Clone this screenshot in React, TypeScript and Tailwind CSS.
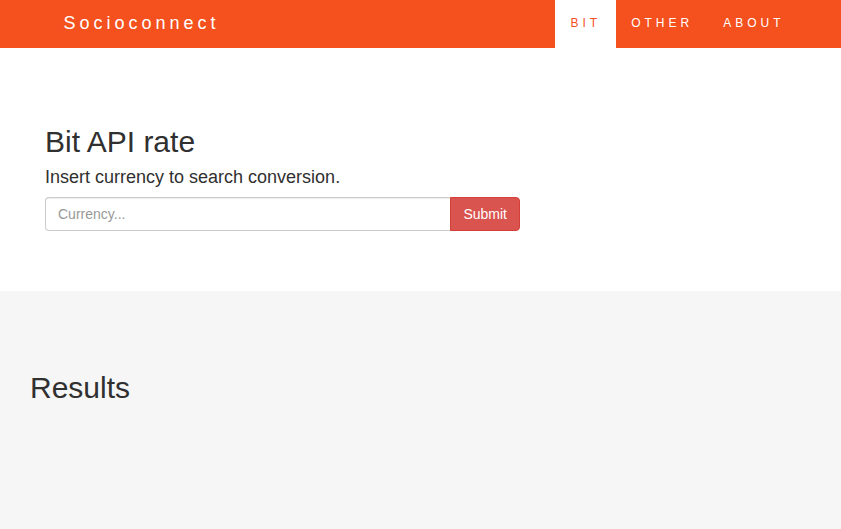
import React from "react";

const links = [
  { label: "BIT", href: "#bit", active: true },
  { label: "OTHER", href: "#other", active: false },
  { label: "ABOUT", href: "#about", active: false },
];

export default function App() {
  return (
    <div className="flex min-h-screen flex-col bg-white font-['Liberation_Sans',Arial,sans-serif] text-[#303030]">
      <nav className="bg-[#f4511e]">
        <div className="mx-auto flex h-12 max-w-[758px] justify-between pl-[22px] text-white">
          <a href="#top" className="py-3 text-lg leading-[22px] font-normal tracking-[4px]">
            Socioconnect
          </a>
          <ul className="flex text-xs leading-4 tracking-[4px]">
            {links.map((link) => (
              <li key={link.label}>
                <a
                  href={link.href}
                  className={
                    link.active
                      ? "block h-12 bg-white px-[15px] py-[15px] text-[#f4511e]"
                      : "block h-12 px-[15px] py-[15px]"
                  }
                >
                  {link.label}
                </a>
              </li>
            ))}
          </ul>
        </div>
      </nav>

      <main className="flex flex-1 flex-col">
        <section className="px-[45px] pt-[77px] pb-[60px]">
          <h1 className="text-[30px] leading-[33px]">Bit API rate</h1>
          <form onSubmit={(event) => event.preventDefault()}>
            <label htmlFor="currency" className="mt-2 mb-2 block text-lg leading-[23px]">
              Insert currency to search conversion.
            </label>
            <div className="flex max-w-[475px] text-sm leading-5">
              <input
                id="currency"
                type="text"
                placeholder="Currency..."
                className="h-[34px] min-w-0 flex-1 rounded-l border border-r-0 border-[#cccccc] px-3 py-1.5 text-[#555555] shadow-[inset_0_1px_1px_rgba(0,0,0,0.075)] placeholder:text-[#999999]"
              />
              <button
                type="submit"
                className="h-[34px] rounded-r border border-[#d43f3a] bg-[#d9534f] px-3 py-1.5 text-white"
              >
                Submit
              </button>
            </div>
          </form>
        </section>

        <section className="flex-1 bg-[#f6f6f6] px-[30px] py-20">
          <h2 className="text-[30px] leading-[33px]">Results</h2>
        </section>
      </main>
    </div>
  );
}
